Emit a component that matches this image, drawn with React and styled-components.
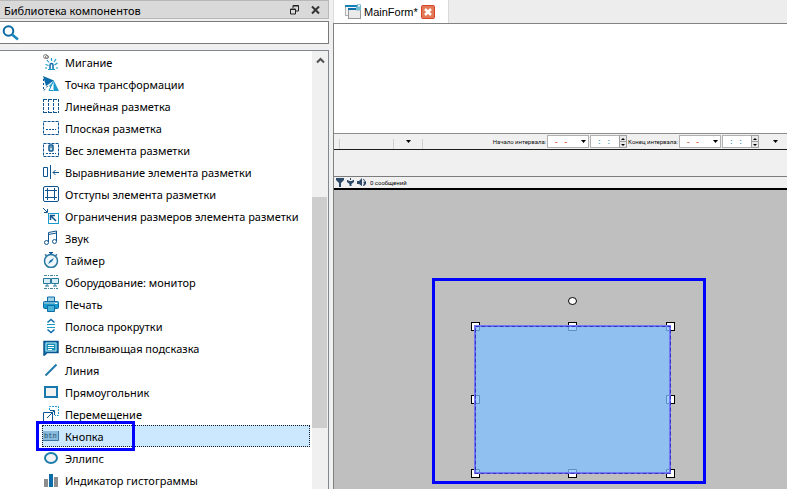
import React from "react";
import styled, { createGlobalStyle } from "styled-components";

const Global = createGlobalStyle`
  *, *::before, *::after { box-sizing: border-box; }
  html, body { margin: 0; height: 100%; overflow: hidden; }
  body { background: #f0f0f0; color: #000; font: 11px/22px "Noto Sans", "Open Sans", sans-serif; }
  button, input { font: inherit; color: inherit; border: 0; padding: 0; margin: 0; background: none; border-radius: 0; }
  button:focus, input:focus { outline: none; }
  svg { display: block; flex: none; }
`;

const NAVY = "#0c5590";
const BLUE = "#0b6cab";
const SKY = "#1a9bcb";

const Window = styled.div`
  display: flex;
  height: 100vh;
  gap: 4px;
`;

const Library = styled.aside`
  flex: 0 0 329px;
  min-width: 0;
  display: flex;
  flex-direction: column;
  min-height: 0;
`;

const TitleBar = styled.header`
  display: flex;
  align-items: center;
  height: 19px;
  flex: none;
  padding: 2px 6px 0 4px;
  background: #d9d9d9;
  border: 1px solid #b8b8b8;
  border-left: 0;
`;

const Title = styled.h1`
  flex: 1;
  margin: 0;
  font-size: 11px;
  line-height: 16px;
  font-weight: 400;
`;

const TitleButton = styled.button`
  width: 11px;
  height: 14px;
  margin-left: 10px;
  padding-bottom: 2px;
`;

const Search = styled.label`
  display: flex;
  align-items: center;
  flex: none;
  height: 23px;
  margin: 2px 0 6px;
  padding-left: 2px;
  background: #fff;
  border: 1px solid #7a7a7a;
  border-left: 0;
`;

const SearchInput = styled.input`
  flex: 1;
  min-width: 0;
  height: 20px;
  padding: 0 6px;
`;

const ListBox = styled.div`
  display: flex;
  flex: 1;
  min-height: 0;
  overflow: hidden;
  background: #fff;
  border: solid #828790;
  border-width: 1px 1px 0 0;
`;

const List = styled.ul`
  flex: 1;
  min-width: 0;
  margin: 0;
  padding: 0 2px 0 42px;
  list-style: none;
`;

const Item = styled.li`
  position: relative;
`;

const ItemButton = styled.button`
  display: flex;
  align-items: center;
  gap: 6px;
  width: 100%;
  height: 22px;
  border: 1px dotted ${(p) => (p.$selected ? "#102030" : "transparent")};
  background: ${(p) => (p.$selected ? "#cce8ff" : "transparent")};
  text-align: left;
  line-height: 18px;
  white-space: nowrap;
`;

const ItemName = styled.span`
  padding-top: 2px;
`;

const ItemMark = styled.span`
  position: absolute;
  left: -6px;
  top: -4px;
  width: 99px;
  height: 30px;
  border: 3px solid #0000ff;
  pointer-events: none;
`;

const ScrollTrack = styled.div`
  flex: 0 0 16px;
  display: flex;
  flex-direction: column;
  background: #f0f0f0;
`;

const ScrollUp = styled.button`
  display: flex;
  justify-content: center;
  align-items: center;
  height: 18px;
`;

const ScrollThumb = styled.div`
  width: 15px;
  height: 231px;
  margin-top: 128px;
  background: #cdcdcd;
`;

const Editor = styled.main`
  flex: 1;
  min-width: 0;
  display: flex;
  flex-direction: column;
`;

const TabStrip = styled.nav`
  display: flex;
  flex: none;
  height: 23px;
  background: #ededed;
  border-left: 1px solid #dcdcdc;
`;

const TabBox = styled.div`
  display: flex;
  align-items: center;
  padding: 0 13px 0 11px;
  background: #fff;
  border-right: 1px solid #d9d9d9;
`;

const Tab = styled.button`
  display: flex;
  align-items: center;
  gap: 3px;
  font-family: "Liberation Sans", sans-serif;
  line-height: 22px;
`;

const TabClose = styled.button`
  margin-left: 3px;
`;

const Body = styled.section`
  flex: 1;
  min-height: 0;
  display: flex;
  flex-direction: column;
  border: solid #828282;
  border-width: 1px 0 0 1px;
`;

const Blank = styled.div`
  flex: none;
  height: 109px;
  background: #fff;
`;

const Toolbar = styled.div`
  display: flex;
  align-items: center;
  justify-content: space-between;
  flex: none;
  height: 17px;
  padding-left: 5px;
  border-top: 1px solid #8c8c8c;
  border-bottom: 1px solid #1c1c1c;
  font: 6px/14px Roboto, sans-serif;
`;

const Group = styled.div`
  display: flex;
  align-items: center;
`;

const Divider = styled.span`
  width: 1px;
  height: 10px;
  margin-top: 5px;
  background: #d0d0d0;
`;

const ToolSlot = styled.span`
  width: 53px;
`;

const ArrowButton = styled.button`
  display: flex;
  align-items: center;
  justify-content: center;
  width: ${(p) => p.$width}px;
  height: 13px;
`;

const FieldLabel = styled.label`
  white-space: nowrap;
  margin-right: 1px;
  color: #111;
`;

const Field = styled.span`
  display: flex;
  align-items: center;
  width: ${(p) => p.$width}px;
  height: 13px;
  margin-right: 1px;
  background: #fff;
  border: 1px solid #b0b0b0;
`;

const Options = styled.span`
  margin-left: 3px;
`;

const FieldInput = styled.input`
  flex: 1;
  min-width: 0;
  height: 11px;
  padding-left: 7px;
  font: 700 8px/11px "Liberation Sans", sans-serif;
  color: ${(p) => p.$color};
`;

const Spinner = styled.span`
  display: flex;
  flex-direction: column;
  width: 8px;
  height: 13px;
  margin-right: -1px;
  background: #e8e8e8;
  border: 1px solid #a0a0a0;
`;

const SpinButton = styled.button`
  display: flex;
  flex: 1;
  align-items: center;
  justify-content: center;

  & + & { border-top: 1px solid #a0a0a0; }
`;

const Spacer = styled.div`
  flex: none;
  height: 26px;
`;

const StatusBar = styled.div`
  display: flex;
  align-items: center;
  gap: 3px;
  flex: none;
  height: 14px;
  padding-left: 2px;
  border-top: 1px solid #7c7c7c;
  border-bottom: 2px solid #000;
  font: 6px/11px Roboto, sans-serif;
`;

const StatusText = styled.span`
  margin-left: 1px;
`;

const Canvas = styled.div`
  position: relative;
  flex: 1;
  min-height: 0;
  overflow: hidden;
  background: #bfbfbf;
`;

const SelectionMark = styled.div`
  position: absolute;
  left: 98px;
  top: 88px;
  width: 274px;
  height: 206px;
  border: 3px solid #0000ff;
`;

const Icon = ({ children }) => (
  <svg width="16" height="16" viewBox="0 0 16 16" fill="none" stroke={NAVY} aria-hidden="true">
    {children}
  </svg>
);

const icons = {
  blink: (
    <Icon>
      <g stroke="#858585"><circle cx="2.500" cy="2.500" r="2" /><circle cx="4" cy="3" r="1.600" /></g>
      <path d="M7 15v-4q0-1.500 1.500-1.500T10 11v4" stroke={BLUE} strokeWidth="1.500" />
      <path d="M5 15.500h7M8.500 4v3M4 6l2 2.500M13 5l-2 3M2.500 10.500l3 1M14.500 9l-3 2M2 14h2M13 14h2" stroke={SKY} strokeWidth="1.200" />
    </Icon>
  ),
  transform: (
    <Icon>
      <path d="M0 0L11 4.500L3 10Z" fill={BLUE} stroke="none" />
      <path d="M11 5L16 15H11L6 10Z" fill={SKY} stroke="none" />
      <path d="M10.500 5L6 14.500H10.500" fill="#fff" stroke={SKY} />
      <path d="M.5 3V15M1 14.500l4-5" strokeDasharray="2 2" />
    </Icon>
  ),
  linear: (
    <Icon>
      <path d="M.5 1V15M5.500 1V15M10.500 1V15M15.500 1V15" strokeDasharray="3 1" />
      <path d="M1 1.500H15M1 14.500H15" strokeDasharray="3 2" />
    </Icon>
  ),
  flat: (
    <Icon>
      <rect x=".5" y="1.500" width="15" height="13" strokeDasharray="3 1" />
      <path d="M3 9.500H13" strokeDasharray="2 1" />
    </Icon>
  ),
  weight: (
    <Icon>
      <rect x=".5" y="1.500" width="15" height="13" strokeDasharray="3 1" />
      <rect x="6" y="3" width="4" height="6" rx="1" fill="#c2ddeb" strokeWidth="1.500" />
      <path d="M8 4v2M3 11.500H13" strokeDasharray="2 1" />
    </Icon>
  ),
  align: (
    <Icon>
      <path d="M.5 3.500h4v9h-4zM7.500 1v14M10 8.500h6M12.500 6L10 8.500l2.500 2.500" />
    </Icon>
  ),
  margins: (
    <Icon>
      <rect x=".5" y=".5" width="15" height="15" rx="1.500" />
      <path d="M4.500 2v12M11.500 2v12M2 4.500h12M2 11.500h12" />
    </Icon>
  ),
  limits: (
    <Icon>
      <path d="M0 0l4 4M4.500 1v3.500H1" />
      <rect x="5.500" y="5.500" width="10" height="10" stroke={SKY} />
      <path d="M13 13L8 8M12 7.500H7.500V12" strokeWidth="1.500" />
    </Icon>
  ),
  sound: (
    <Icon>
      <path d="M5.500 12V2.500L13.500 1V11M5.500 4.500L13.500 3" />
      <ellipse cx="3.500" cy="12.500" rx="2" ry="2" /><ellipse cx="11.500" cy="11.500" rx="2" ry="2" />
    </Icon>
  ),
  timer: (
    <Icon>
      <circle cx="8" cy="9" r="6.500" stroke="#2878a0" strokeWidth="1.500" fill="#eef6fa" />
      <path d="M6 .5h4M8 .5v2M2 2.500l1.500 1M14 2.500l-1.500 1" strokeWidth="1.500" />
      <path d="M5 12l2-3.500L11 6L9 9.500Z" fill={BLUE} stroke="none" />
    </Icon>
  ),
  monitor: (
    <Icon>
      <path d="M1 1.500h14M1 14.500h14" stroke="#41849d" strokeDasharray="3 1 1 1" />
      <path d="M.5 4.500h7v5h-7zM8.500 4.500h7v5h-7zM4 10v2M12 10v2M2 12h4M10 12h4" stroke="#24779c" fill="#d8edf5" />
    </Icon>
  ),
  print: (
    <Icon>
      <path d="M4.500 1h7v5h-7z" fill="#a5d3e6" stroke={BLUE} />
      <rect x=".5" y="5.500" width="15" height="7" rx="1" fill={SKY} stroke={BLUE} />
      <path d="M1 6h14v2H1z" fill="#6fb7d5" stroke="none" />
      <path d="M4.500 9.500h7v6h-7z" fill="#49b3d4" stroke={BLUE} /><path d="M12 7.500h2" stroke="#fff" />
    </Icon>
  ),
  scroll: (
    <Icon>
      <path d="M4.500 4.500L8 1.500L11.500 4.500M4.500 11.500L8 14.500L11.500 11.500" stroke={BLUE} strokeWidth="1.500" />
      <path d="M4 6.500h8M4 9.500h8" stroke={SKY} />
    </Icon>
  ),
  tooltip: (
    <Icon>
      <path d="M1 1.500h14v11H4L1.500 15H1z" fill="#1690bd" stroke={NAVY} strokeWidth="1.500" />
      <path d="M3 3h10v8H3z" stroke="#bde2ee" /><path d="M5 5.500h6M5 7.500h6M5 9.500h4" stroke="#fff" />
    </Icon>
  ),
  line: <Icon><path d="M2.500 13.500L13.500 2.500" stroke="#2078ac" strokeWidth="2" /></Icon>,
  rect: <Icon><rect x="2" y="3" width="12" height="10" stroke="#1779ae" strokeWidth="2" fill="#f2f2f2" /></Icon>,
  move: (
    <Icon>
      <path d="M6.500 4V.5h9v9H12" stroke={SKY} strokeDasharray="2 1" />
      <path d="M.5 6.500h9v9h-9zM4 12L11 5M7 4.500h4.500V9" />
    </Icon>
  ),
  button: (
    <Icon>
      <rect x="0" y="3" width="16" height="10" fill="#89badc" stroke="none" />
      <path d="M0 12.500h15.500V3" stroke="#3b78a6" />
      <text x="1" y="10" fill="#23506f" stroke="none" fontFamily="Liberation Mono, monospace" fontSize="7">btn</text>
    </Icon>
  ),
  ellipse: <Icon><ellipse cx="8" cy="8" rx="6" ry="5" stroke="#1c7cac" strokeWidth="2" fill="#f2f2f2" /></Icon>,
  histogram: (
    <Icon>
      <path d="M1 7h4v8H1zM11 5h4v10h-4z" fill="#8d8d8d" stroke="none" />
      <path d="M6 2h4v13H6z" fill={BLUE} stroke="none" />
    </Icon>
  ),
};

const components = [
  ["blink", "Мигание"],
  ["transform", "Точка трансформации"],
  ["linear", "Линейная разметка"],
  ["flat", "Плоская разметка"],
  ["weight", "Вес элемента разметки"],
  ["align", "Выравнивание элемента разметки"],
  ["margins", "Отступы элемента разметки"],
  ["limits", "Ограничения размеров элемента разметки"],
  ["sound", "Звук"],
  ["timer", "Таймер"],
  ["monitor", "Оборудование: монитор"],
  ["print", "Печать"],
  ["scroll", "Полоса прокрутки"],
  ["tooltip", "Всплывающая подсказка"],
  ["line", "Линия"],
  ["rect", "Прямоугольник"],
  ["move", "Перемещение"],
  ["button", "Кнопка"],
  ["ellipse", "Эллипс"],
  ["histogram", "Индикатор гистограммы"],
];

const Arrow = () => (
  <svg width="5" height="3" viewBox="0 0 5 3" aria-hidden="true">
    <path d="M0 0H5L2.500 3Z" fill="#000" />
  </svg>
);

const SpinArrow = ({ up }) => (
  <svg width="4" height="2" viewBox="0 0 4 2" aria-hidden="true">
    <path d={up ? "M0 2L2 0L4 2Z" : "M0 0H4L2 2Z"} fill="#000" />
  </svg>
);

const Interval = ({ id, label }) => (
  <>
    <FieldLabel htmlFor={id}>{label}</FieldLabel>
    <Field $width={42}>
      <FieldInput id={id} $color="#e0562c" defaultValue={"-\u00a0\u00a0\u00a0-"} />
      <ArrowButton $width={9} aria-label="Календарь"><Arrow /></ArrowButton>
    </Field>
    <Field $width={37}>
      <FieldInput aria-label="Время" $color="#4f9fc4" defaultValue={":\u00a0\u00a0\u00a0:"} />
      <Spinner>
        <SpinButton aria-label="Больше"><SpinArrow up /></SpinButton>
        <SpinButton aria-label="Меньше"><SpinArrow /></SpinButton>
      </Spinner>
    </Field>
  </>
);

const handles = [[36, 41], [133, 41], [231, 41], [36, 114], [231, 114], [36, 188], [133, 188], [231, 188]];

const Shape = () => (
  <svg width="268" height="200" viewBox="0 0 268 200" role="img" aria-label="Кнопка">
    <ellipse cx="137.500" cy="20" rx="4" ry="3.500" fill="#fff" stroke="#000" />
    {handles.map(([x, y]) => (
      <rect key={`${x}-${y}`} x={x + 0.5} y={y + 0.5} width="8" height="8" fill="#fff" stroke="#000" />
    ))}
    <rect x="39" y="44" width="197" height="149" fill="#90c0f0" />
    <g fill="#a3cfff" stroke="#5b90c5">
      <path d="M133.500 45v4.500h8V45M133.500 193v-4.500h8V193M40 114.500h4.500v8H40M236 114.500h-4.500v8H236M40 49.500h4.500V45M236 49.500h-4.500V45M40 188.500h4.500V193M236 188.500h-4.500V193" />
    </g>
    <rect x="40" y="45" width="195" height="147" fill="none" stroke="#7279f4" strokeWidth="2" />
    <rect x="40.500" y="45.500" width="195" height="147" fill="none" stroke="#3932c0" strokeDasharray="4 2" />
  </svg>
);

export default function App() {
  return (
    <Window>
      <Global />
      <Library>
        <TitleBar>
          <Title>Библиотека компонентов</Title>
          <TitleButton aria-label="Открепить">
            <svg width="9" height="10" viewBox="0 0 9 10" fill="none" stroke="#222">
              <path d="M3 3V.5h5.500V6H6M3 1h6M.5 4h5v5h-5zM0 4.500h6" />
            </svg>
          </TitleButton>
          <TitleButton aria-label="Закрыть">
            <svg width="9" height="10" viewBox="0 0 9 10" stroke="#333" strokeWidth="2">
              <path d="M1 1.500l7 7M8 1.500l-7 7" />
            </svg>
          </TitleButton>
        </TitleBar>
        <Search>
          <svg width="17" height="16" viewBox="0 0 17 16" fill="none" aria-hidden="true">
            <circle cx="6.500" cy="6" r="4.800" stroke="#0a68a4" strokeWidth="2" />
            <path d="M10 9.500l6 5" stroke="#1788bf" strokeWidth="2.500" />
          </svg>
          <SearchInput aria-label="Поиск" />
        </Search>
        <ListBox>
          <List>
            {components.map(([icon, name]) => (
              <Item key={icon}>
                <ItemButton $selected={icon === "button"}>
                  {icons[icon]}
                  <ItemName>{name}</ItemName>
                </ItemButton>
                {icon === "button" && <ItemMark />}
              </Item>
            ))}
          </List>
          <ScrollTrack>
            <ScrollUp aria-label="Вверх">
              <svg width="9" height="7" viewBox="0 0 9 7" fill="none" stroke="#505050" strokeWidth="2">
                <path d="M1 5.500L4.500 2L8 5.500" />
              </svg>
            </ScrollUp>
            <ScrollThumb />
          </ScrollTrack>
        </ListBox>
      </Library>
      <Editor>
        <TabStrip>
          <TabBox>
            <Tab>
              <svg width="16" height="16" viewBox="0 0 16 16" fill="none" aria-hidden="true">
                <rect x=".5" y="1.500" width="12" height="10" fill="#f4f4f4" stroke="#b0b0b0" />
                <path d="M0 2h13" stroke="#1481b8" strokeWidth="2" />
                <rect x="3.500" y="4.500" width="12" height="10" fill="#eaeaea" stroke="#999" />
                <path d="M3 5h13" stroke="#0f6fa9" strokeWidth="2" />
                <path d="M12.500 3V1.500a1.500 1.500 0 0 1 3 0V3" stroke="#64a9c5" />
                <rect x="11" y="2.500" width="5" height="4" fill="#75bbd2" />
              </svg>
              MainForm*
            </Tab>
            <TabClose aria-label="Закрыть вкладку">
              <svg width="14" height="14" viewBox="0 0 14 14">
                <rect x=".5" y=".5" width="13" height="13" rx="1" fill="#e27a55" stroke="#d9452b" />
                <path d="M4 4l6 6M10 4l-6 6" stroke="#fff" strokeWidth="2.500" />
              </svg>
            </TabClose>
          </TabBox>
        </TabStrip>
        <Body>
          <Blank />
          <Toolbar>
            <Group>
              <Divider />
              <ToolSlot />
              <Divider />
              <ArrowButton $width={28} aria-label="Ещё"><Arrow /></ArrowButton>
              <Divider />
            </Group>
            <Group>
              <Interval id="from" label="Начало интервала:" />
              <Interval id="to" label="Конец интервала:" />
              <Options>
                <ArrowButton $width={24} aria-label="Параметры"><Arrow /></ArrowButton>
              </Options>
            </Group>
          </Toolbar>
          <Spacer />
          <StatusBar>
            <svg width="8" height="9" viewBox="0 0 8 9" fill="#2c4a68"><path d="M0 0h8v2L5 5v4H3V5L0 2z" /></svg>
            <svg width="7" height="9" viewBox="0 0 7 9" fill="#2c4a68"><path d="M3 0h1v2H3zM0 2h1l1 1h3l1-1h1v2L4.500 6v2h-2V6L0 4z" /></svg>
            <svg width="9" height="9" viewBox="0 0 9 9" fill="#2c4a68"><path d="M0 3h2l3-3v8L2 6H0zM6 1l2 1v1L6 2zM6 4l3-1v3L7 8H6l1-3z" /></svg>
            <StatusText>0 сообщений</StatusText>
          </StatusBar>
          <Canvas>
            <SelectionMark><Shape /></SelectionMark>
          </Canvas>
        </Body>
      </Editor>
    </Window>
  );
}
